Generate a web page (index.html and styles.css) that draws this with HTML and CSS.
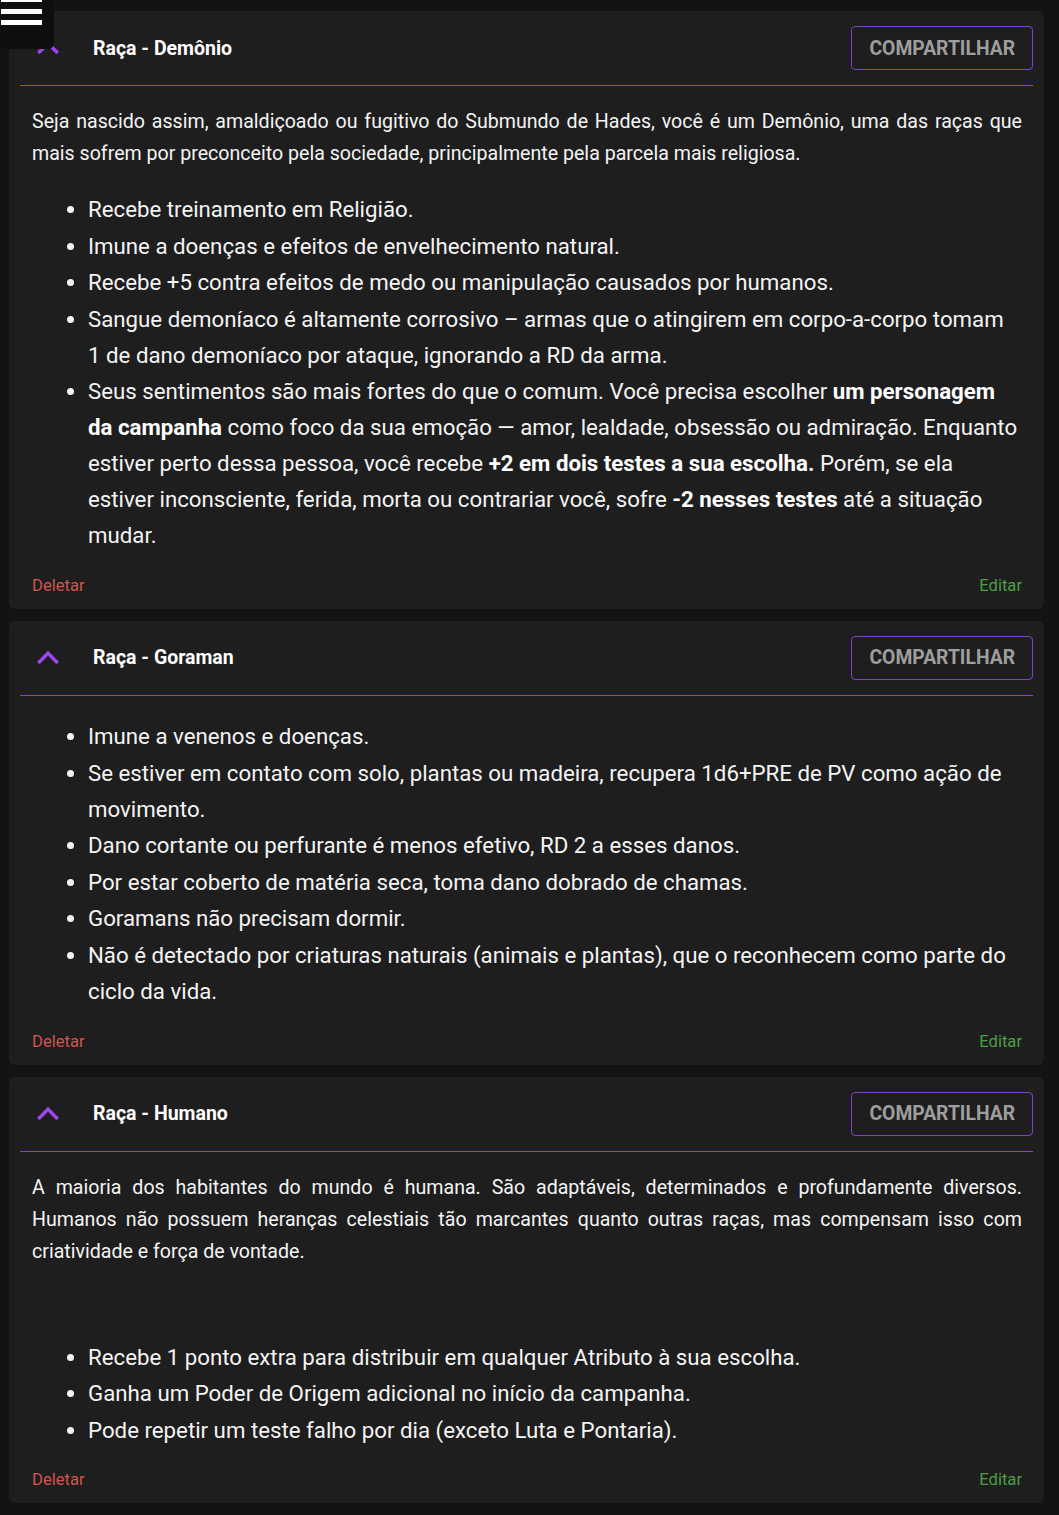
FILE: index.html
```html
<!DOCTYPE html>
<html lang="pt-BR">
<head>
<meta charset="utf-8">
<title>Raças</title>
<link rel="stylesheet" href="styles.css">
</head>
<body>
<button class="menu-btn" aria-label="Menu">
  <svg width="54" height="49" viewBox="0 0 54 49">
    <rect x="1" y="0" width="41" height="2" fill="#fff"/>
    <rect x="1" y="9" width="41" height="5" fill="#fff"/>
    <rect x="1" y="20" width="41" height="5" fill="#fff"/>
  </svg>
</button>

<main class="list">
  <section class="card">
    <header class="card-head">
      <span class="toggle"><svg width="44" height="44" viewBox="0 0 24 24"><path d="M12 8l-6 6 1.41 1.41L12 10.83l4.59 4.58L18 14z" fill="#9b45f0"/></svg></span>
      <h2 class="title">Raça - Demônio</h2>
      <button class="share">COMPARTILHAR</button>
    </header>
    <div class="content">
      <p class="desc">Seja nascido assim, amaldiçoado ou fugitivo do Submundo de Hades, você é um Demônio, uma das raças que mais sofrem por preconceito pela sociedade, principalmente pela parcela mais religiosa.</p>
      <ul class="traits">
        <li>Recebe treinamento em Religião.</li>
        <li>Imune a doenças e efeitos de envelhecimento natural.</li>
        <li>Recebe +5 contra efeitos de medo ou manipulação causados por humanos.</li>
        <li>Sangue demoníaco é altamente corrosivo – armas que o atingirem em corpo-a-corpo tomam 1 de dano demoníaco por ataque, ignorando a RD da arma.</li>
        <li>Seus sentimentos são mais fortes do que o comum. Você precisa escolher <strong>um personagem da campanha</strong> como foco da sua emoção — amor, lealdade, obsessão ou admiração. Enquanto estiver perto dessa pessoa, você recebe <strong>+2 em dois testes a sua escolha.</strong> Porém, se ela estiver inconsciente, ferida, morta ou contrariar você, sofre <strong>-2 nesses testes</strong> até a situação mudar.</li>
      </ul>
    </div>
    <footer class="card-foot">
      <span class="del">Deletar</span>
      <span class="edit">Editar</span>
    </footer>
  </section>

  <section class="card">
    <header class="card-head">
      <span class="toggle"><svg width="44" height="44" viewBox="0 0 24 24"><path d="M12 8l-6 6 1.41 1.41L12 10.83l4.59 4.58L18 14z" fill="#9b45f0"/></svg></span>
      <h2 class="title">Raça - Goraman</h2>
      <button class="share">COMPARTILHAR</button>
    </header>
    <div class="content">
      <ul class="traits">
        <li>Imune a venenos e doenças.</li>
        <li>Se estiver em contato com solo, plantas ou madeira, recupera 1d6+PRE de PV como ação de movimento.</li>
        <li>Dano cortante ou perfurante é menos efetivo, RD 2 a esses danos.</li>
        <li>Por estar coberto de matéria seca, toma dano dobrado de chamas.</li>
        <li>Goramans não precisam dormir.</li>
        <li>Não é detectado por criaturas naturais (animais e plantas), que o reconhecem como parte do ciclo da vida.</li>
      </ul>
    </div>
    <footer class="card-foot">
      <span class="del">Deletar</span>
      <span class="edit">Editar</span>
    </footer>
  </section>

  <section class="card">
    <header class="card-head">
      <span class="toggle"><svg width="44" height="44" viewBox="0 0 24 24"><path d="M12 8l-6 6 1.41 1.41L12 10.83l4.59 4.58L18 14z" fill="#9b45f0"/></svg></span>
      <h2 class="title">Raça - Humano</h2>
      <button class="share">COMPARTILHAR</button>
    </header>
    <div class="content">
      <p class="desc">A maioria dos habitantes do mundo é humana. São adaptáveis, determinados e profundamente diversos. Humanos não possuem heranças celestiais tão marcantes quanto outras raças, mas compensam isso com criatividade e força de vontade.</p>
      <p class="desc empty"><br></p>
      <ul class="traits">
        <li>Recebe 1 ponto extra para distribuir em qualquer Atributo à sua escolha.</li>
        <li>Ganha um Poder de Origem adicional no início da campanha.</li>
        <li>Pode repetir um teste falho por dia (exceto Luta e Pontaria).</li>
      </ul>
    </div>
    <footer class="card-foot">
      <span class="del">Deletar</span>
      <span class="edit">Editar</span>
    </footer>
  </section>
</main>
</body>
</html>
```

FILE: styles.css
```css
* { box-sizing: border-box; }

html, body {
  margin: 0;
  background: #131313;
}

body {
  font-family: Roboto, "Noto Sans", sans-serif;
  color: #f4f4f4;
  padding: 11px 15px 12px 9px;
}

.menu-btn {
  position: fixed;
  top: 0;
  left: 0;
  width: 54px;
  height: 49px;
  padding: 0;
  border: none;
  background: #0f0f0f;
  border-bottom-right-radius: 6px;
  z-index: 10;
  display: block;
}
.menu-btn svg { display: block; }

.list {
  display: flex;
  flex-direction: column;
  gap: 12px;
}

.card {
  background: #1e1e1e;
  border-radius: 6px;
  padding: 0 11px 13px;
}

.card-head {
  display: flex;
  align-items: center;
  padding: 15px 0 15px;
  border-bottom: 1px solid #8a40e0;
}

.toggle {
  width: 44px;
  height: 44px;
  margin-left: 6px;
  display: block;
}
.toggle svg { display: block; }

.title {
  margin: 0 0 0 23px;
  font-size: 19.5px;
  font-weight: 700;
  color: #ffffff;
  flex: 1;
}

.share {
  height: 44px;
  padding: 0 17px;
  background: transparent;
  border: 1px solid #7e42cc;
  border-radius: 4px;
  color: #9e9e9e;
  font-family: Roboto, sans-serif;
  font-size: 19.3px;
  font-weight: 700;
}

.content {
  padding: 20px 11px 0 12px;
}

.desc {
  margin: 0;
  font-size: 19.6px;
  line-height: 32px;
  text-align: justify;
}
.desc.empty { margin-top: 18px; }

.traits {
  margin: 21px 0 0;
  padding: 0 4px 0 56px;
  font-size: 22.25px;
  line-height: 36px;
}
.traits:first-child { margin-top: 2px; }
.traits li { margin-bottom: 0.6px; }
.traits strong { font-weight: 700; color: #fff; }

.card-foot {
  display: flex;
  justify-content: space-between;
  padding: 22px 11px 0 12px;
  font-size: 16.6px;
  line-height: 20px;
}
.del { color: #d0544f; }
.edit { color: #4c9e45; }
```
